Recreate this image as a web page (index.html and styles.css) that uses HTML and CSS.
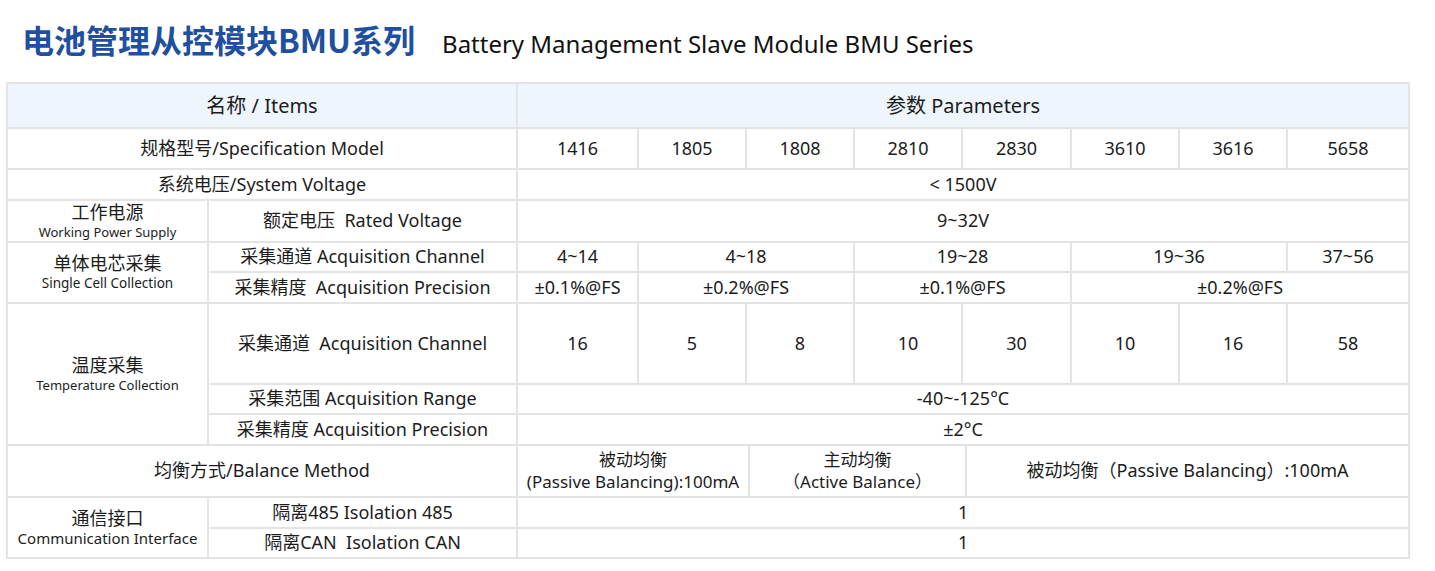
FILE: index.html
```html
<!DOCTYPE html>
<html lang="zh">
<head>
<meta charset="utf-8">
<title>BMU Series</title>
<link rel="stylesheet" href="styles.css">
</head>
<body>
<div class="page">
  <header class="heading">
    <h1 class="title-cn">电池管理从控模块BMU系列</h1>
    <h2 class="title-en">Battery Management Slave Module BMU Series</h2>
  </header>
  <table class="spec">
    <colgroup>
      <col class="c-a"><col class="c-b">
      <col class="c-1"><col class="c-2"><col class="c-3"><col class="c-4"><col class="c-5"><col class="c-6"><col class="c-7"><col class="c-8">
    </colgroup>
    <tr class="r-head">
      <th colspan="2">名称 / Items</th>
      <th colspan="8">参数 Parameters</th>
    </tr>
    <tr class="r-model">
      <td colspan="2">规格型号/Specification Model</td>
      <td>1416</td><td>1805</td><td>1808</td><td>2810</td><td>2830</td><td>3610</td><td>3616</td><td>5658</td>
    </tr>
    <tr class="r-31">
      <td colspan="2">系统电压/System Voltage</td>
      <td colspan="8">&lt; 1500V</td>
    </tr>
    <tr class="r-power">
      <td class="group"><span class="g-cn">工作电源</span><span class="g-en">Working Power Supply</span></td>
      <td>额定电压&nbsp;&nbsp;Rated Voltage</td>
      <td colspan="8">9~32V</td>
    </tr>
    <tr class="r-30">
      <td class="group" rowspan="2"><span class="g-cn">单体电芯采集</span><span class="g-en g-wide">Single Cell Collection</span></td>
      <td>采集通道 Acquisition Channel</td>
      <td>4~14</td><td colspan="2">4~18</td><td colspan="2">19~28</td><td colspan="2">19~36</td><td>37~56</td>
    </tr>
    <tr class="r-31">
      <td>采集精度&nbsp;&nbsp;Acquisition Precision</td>
      <td>±0.1%@FS</td><td colspan="2">±0.2%@FS</td><td colspan="2">±0.1%@FS</td><td colspan="3">±0.2%@FS</td>
    </tr>
    <tr class="r-temp">
      <td class="group" rowspan="3"><span class="g-cn">温度采集</span><span class="g-en">Temperature Collection</span></td>
      <td>采集通道&nbsp;&nbsp;Acquisition Channel</td>
      <td>16</td><td>5</td><td>8</td><td>10</td><td>30</td><td>10</td><td>16</td><td>58</td>
    </tr>
    <tr class="r-30">
      <td>采集范围 Acquisition Range</td>
      <td colspan="8">-40~-125°C</td>
    </tr>
    <tr class="r-31">
      <td>采集精度 Acquisition Precision</td>
      <td colspan="8">±2°C</td>
    </tr>
    <tr class="r-balance">
      <td colspan="2">均衡方式/Balance Method</td>
      <td colspan="8" class="split">
        <div class="bal">
          <div class="bal-cell bal-1"><span class="bl">被动均衡</span><span class="bl">(Passive Balancing):100mA</span></div>
          <div class="bal-cell bal-2"><span class="bl">主动均衡</span><span class="bl">（Active Balance）</span></div>
          <div class="bal-cell bal-3 big">被动均衡（Passive Balancing）:100mA</div>
        </div>
      </td>
    </tr>
    <tr class="r-31">
      <td class="group" rowspan="2"><span class="g-cn">通信接口</span><span class="g-en g-comm">Communication Interface</span></td>
      <td>隔离485 Isolation 485</td>
      <td colspan="8">1</td>
    </tr>
    <tr class="r-30">
      <td>隔离CAN&nbsp;&nbsp;Isolation CAN</td>
      <td colspan="8">1</td>
    </tr>
  </table>
</div>
</body>
</html>
```

FILE: styles.css
```css
html, body {
  margin: 0;
  padding: 0;
  background: #ffffff;
}

body {
  font-family: "Noto Sans", "Noto Sans CJK SC", sans-serif;
  color: #1c1c1c;
}

.page {
  padding: 0 0 0 6px;
}

.heading {
  display: flex;
  align-items: baseline;
  height: 82px;
  box-sizing: border-box;
  padding: 19px 0 0 16px;
}

.title-cn {
  margin: 0;
  font-family: "Noto Sans CJK SC", "Noto Sans", sans-serif;
  font-size: 32px;
  font-weight: 700;
  color: #1f4f9f;
  line-height: 40px;
}

.title-en {
  margin: 0 0 0 27px;
  font-size: 24px;
  font-weight: 400;
  color: #111111;
  line-height: 40px;
}

.spec {
  border-collapse: collapse;
  table-layout: fixed;
  width: 1402px;
  font-size: 18px;
}

.c-a { width: 201px; }
.c-b { width: 309px; }
.c-1 { width: 121px; }
.c-2 { width: 108px; }
.c-3 { width: 108px; }
.c-4 { width: 108px; }
.c-5 { width: 109px; }
.c-6 { width: 108px; }
.c-7 { width: 108px; }
.c-8 { width: 122px; }

.spec th,
.spec td {
  border: 2px solid #e4e4e4;
  text-align: center;
  vertical-align: middle;
  padding: 0;
  line-height: 1.2;
  font-weight: 400;
  white-space: nowrap;
}

.spec th {
  background: #eef5fd;
  font-size: 20px;
}

.r-head { height: 45px; }
.r-model { height: 41px; }
.r-31 { height: 31px; }
.r-30 { height: 30px; }
.r-power { height: 42px; }
.r-temp { height: 81px; }
.r-balance { height: 52px; }

.group .g-cn {
  display: block;
  font-size: 18px;
  line-height: 21px;
}

.group .g-en {
  display: block;
  font-size: 13px;
  line-height: 18px;
}

.group .g-wide {
  font-size: 13.5px;
}

.group .g-comm {
  font-size: 15px;
}

.spec td.split {
  padding: 0;
}

.bal {
  display: flex;
  height: 50px;
}

.bal-cell {
  display: flex;
  flex-direction: column;
  align-items: center;
  justify-content: center;
  font-size: 17px;
}

.bl {
  display: block;
  line-height: 22px;
}

.bal-1 {
  width: 230px;
  border-right: 2px solid #e4e4e4;
}

.bal-2 {
  width: 215px;
  border-right: 2px solid #e4e4e4;
}

.bal-3 {
  flex: 1;
}

.big {
  font-size: 18px;
}
```
